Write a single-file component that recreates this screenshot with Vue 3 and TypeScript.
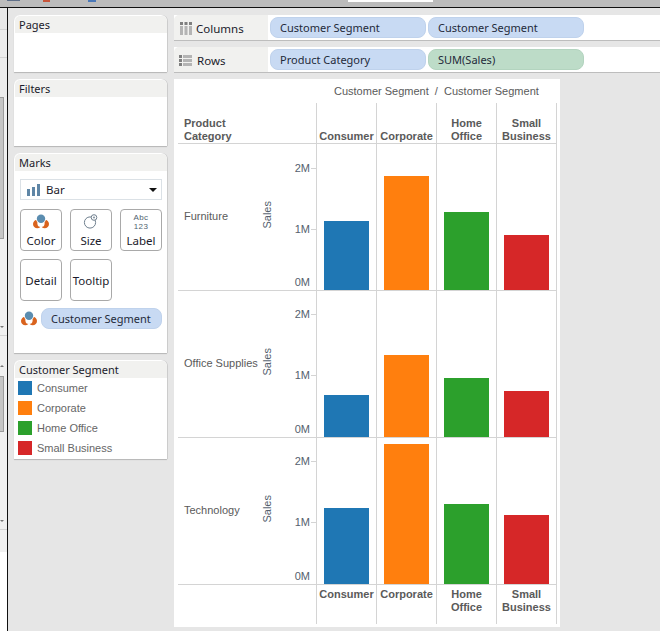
<script setup lang="ts">
interface Row { name: string; bars: number[] }
const colors: string[] = ['#1f77b4', '#ff7f0e', '#2ca02c', '#d62728']
const segments: string[] = ['Consumer', 'Corporate', 'Home Office', 'Small Business']
const rows: Row[] = [
  { name: 'Furniture', bars: [69, 114, 78, 55] },
  { name: 'Office Supplies', bars: [42, 82, 59, 46] },
  { name: 'Technology', bars: [76, 140, 80, 69] },
]
</script>

<template>
  <div class="app">
    <div class="topstrip">
      <i class="frag frag-a"></i><i class="frag frag-b"></i><i class="frag frag-c"></i>
      <i class="frag frag-w"></i>
    </div>
    <div class="body">
      <div class="sidebar">
        <div class="side-top"><div class="st1"></div><div class="st2"></div></div>
        <div class="thumb thumb-1"></div>
        <div class="side-mid">
          <i class="arr-d"></i>
          <div class="side-line"></div>
          <i class="arr-u"></i>
        </div>
        <div class="thumb thumb-2"></div>
        <div class="side-low">
          <i class="arr-d"></i>
          <div class="side-line"></div>
        </div>
        <div class="side-white"></div>
      </div>
      <div class="main">
        <div class="left">
          <section class="card pages">
            <header class="card-h">Pages</header>
          </section>
          <section class="card filters">
            <header class="card-h">Filters</header>
          </section>
          <section class="card marks">
            <header class="card-h">Marks</header>
            <div class="marks-body">
              <div class="select">
                <svg class="bar-ico" width="13" height="12" viewBox="0 0 13 12">
                  <rect x="0" y="5" width="3" height="7" fill="#5f86a6" />
                  <rect x="5" y="3" width="3" height="9" fill="#5f86a6" />
                  <rect x="10" y="0" width="3" height="12" fill="#5f86a6" />
                </svg>
                <span>Bar</span>
                <i class="caret"></i>
              </div>
              <div class="btns">
                <div class="btn">
                  <svg class="ico" width="16" height="15" viewBox="0 0 16 15">
                    <circle cx="4.3" cy="10" r="4.3" fill="#d9631e" />
                    <circle cx="11.7" cy="10" r="4.3" fill="#d9631e" />
                    <circle cx="8" cy="9.5" r="3.6" fill="#fff" />
                    <circle cx="8" cy="4.7" r="5" fill="#fff" />
                    <circle cx="8" cy="4.7" r="4.2" fill="#5b8db0" />
                  </svg>
                  <span>Color</span>
                </div>
                <div class="btn">
                  <svg class="ico" width="16" height="15" viewBox="0 0 16 15">
                    <circle cx="7" cy="8.5" r="5.6" fill="none" stroke="#6f7f8e" stroke-width="1" />
                    <circle cx="11" cy="3.5" r="2.8" fill="#fff" stroke="#6f7f8e" stroke-width="1" />
                    <circle cx="11" cy="3.5" r="1.1" fill="#8a99a6" />
                  </svg>
                  <span>Size</span>
                </div>
                <div class="btn">
                  <div class="abc">Abc<br />123</div>
                  <span>Label</span>
                </div>
                <div class="btn plain"><span>Detail</span></div>
                <div class="btn plain"><span>Tooltip</span></div>
              </div>
              <div class="enc">
                <svg width="16" height="15" viewBox="0 0 16 15">
                  <circle cx="4.3" cy="10" r="4.3" fill="#d9631e" />
                  <circle cx="11.7" cy="10" r="4.3" fill="#d9631e" />
                  <circle cx="8" cy="9.5" r="3.6" fill="#fff" />
                  <circle cx="8" cy="4.7" r="5" fill="#fff" />
                  <circle cx="8" cy="4.7" r="4.2" fill="#5b8db0" />
                </svg>
                <div class="pill enc-pill">Customer Segment</div>
              </div>
            </div>
          </section>
          <section class="card legend">
            <header class="card-h">Customer Segment</header>
            <div class="legend-body">
              <div v-for="(s, i) in segments" :key="s" class="leg-row">
                <i class="swatch" :style="{ background: colors[i] }"></i>
                <span>{{ s }}</span>
              </div>
            </div>
          </section>
        </div>
        <div class="right">
          <div class="shelf shelf-c">
            <div class="shelf-l">
              <svg class="shelf-ico" width="12" height="13" viewBox="0 0 12 13">
                <g fill="#7f7f7f"><rect x="0" y="0" width="3" height="3" /><rect x="4.5" y="0" width="3" height="3" /><rect x="9" y="0" width="3" height="3" /></g>
                <g fill="#b4b4b4"><rect x="0" y="4" width="3" height="9" /><rect x="4.5" y="4" width="3" height="9" /><rect x="9" y="4" width="3" height="9" /></g>
              </svg>
              <span>Columns</span>
            </div>
            <div class="pill blue">Customer Segment</div>
            <div class="pill blue">Customer Segment</div>
          </div>
          <div class="shelf shelf-r">
            <div class="shelf-l">
              <svg class="shelf-ico" width="13" height="11" viewBox="0 0 13 11">
                <g fill="#7f7f7f"><rect x="0" y="0" width="3" height="3" /><rect x="0" y="4" width="3" height="3" /><rect x="0" y="8" width="3" height="3" /></g>
                <g fill="#b4b4b4"><rect x="4" y="0" width="9" height="3" /><rect x="4" y="4" width="9" height="3" /><rect x="4" y="8" width="9" height="3" /></g>
              </svg>
              <span>Rows</span>
            </div>
            <div class="pill blue">Product Category</div>
            <div class="pill green">SUM(Sales)</div>
          </div>
          <div class="viz">
            <div class="title">Customer Segment &nbsp;/&nbsp; Customer Segment</div>
            <div class="grid-row head">
              <div class="lab-cell head-lab">Product<br />Category</div>
              <div v-for="s in segments" :key="s" class="col-h">
                <span v-if="s.includes(' ')">{{ s.split(' ')[0] }}<br />{{ s.split(' ')[1] }}</span>
                <span v-else>{{ s }}</span>
              </div>
            </div>
            <div v-for="r in rows" :key="r.name" class="grid-row pane">
              <div class="lab-cell pane-lab">
                <span class="cat">{{ r.name }}</span>
                <span class="sales">Sales</span>
                <div class="axis">
                  <div class="tick t2"><span>2M</span><i></i></div>
                  <div class="tick t1"><span>1M</span><i></i></div>
                  <div class="tick t0"><span>0M</span><i class="none"></i></div>
                </div>
              </div>
              <div v-for="(b, i) in r.bars" :key="i" class="bar-cell">
                <div class="bar" :style="{ height: b + 'px', background: colors[i] }"></div>
              </div>
            </div>
            <div class="grid-row foot">
              <div class="lab-cell"></div>
              <div v-for="s in segments" :key="s" class="col-h">
                <span v-if="s.includes(' ')">{{ s.split(' ')[0] }}<br />{{ s.split(' ')[1] }}</span>
                <span v-else>{{ s }}</span>
              </div>
            </div>
          </div>
        </div>
      </div>
    </div>
  </div>
</template>

<style>
html, body { margin: 0; padding: 0; }
</style>

<style scoped>
.app {
  width: 660px;
  height: 631px;
  overflow: hidden;
  background: #e6e6e6;
  font-family: "Noto Sans", sans-serif;
  display: flex;
  flex-direction: column;
}
.topstrip {
  height: 7px;
  flex: none;
  background: #bcbcbc;
  border-bottom: 1px solid #111;
  display: flex;
  align-items: flex-start;
}
.frag { display: block; height: 2px; }
.frag-a { width: 13px; height: 1px; margin-left: 7px; background: #5f6f88; }
.frag-b { width: 7px; margin-left: 23px; background: #c8553a; }
.frag-c { width: 8px; margin-left: 38px; background: #4a78b8; }
.frag-w { width: 85px; margin-left: 252px; background: #fff; }
.body { flex: 1; display: flex; min-height: 0; }
.sidebar {
  width: 8px;
  box-sizing: border-box;
  flex: none;
  background: #f0f0f0;
  border-right: 1px solid #111;
  display: flex;
  flex-direction: column;
}
.side-top { height: 89px; flex: none; box-sizing: border-box; background: #ececec; }
.st1 { height: 21px; border-bottom: 1px solid #d4d4d4; background: #e8e8e8; }
.st2 { height: 27px; border-bottom: 1px solid #d4d4d4; }
.thumb { width: 4px; background: #c6c6c6; border: 1px solid #9c9c9c; border-left: 0; box-sizing: border-box; flex: none; }
.thumb-1 { height: 142px; }
.side-mid { height: 137px; flex: none; display: flex; flex-direction: column; }
.thumb-2 { height: 56px; }
.side-low { height: 120px; flex: none; display: flex; flex-direction: column; }
.side-white { flex: 1; background: #fff; }
.side-line { height: 1px; background: #d4d4d4; margin-top: 7px; flex: none; }
.arr-d, .arr-u {
  display: block;
  width: 0;
  height: 0;
  border-left: 2px solid transparent;
  border-right: 2px solid transparent;
  flex: none;
}
.arr-d { border-top: 2px solid #777; }
.arr-u { border-bottom: 2px solid #777; margin-top: 29px; }
.side-mid .arr-d { margin-top: 87px; }
.side-low .arr-d { margin-top: 88px; }

.main { flex: 1; display: flex; padding: 7px 0 0 6px; gap: 7px; min-width: 0; }
.left { width: 153px; flex: none; display: flex; flex-direction: column; gap: 7px; }
.card {
  background: #fff;
  border-radius: 6px 6px 0 0;
  box-shadow: 0 1px 1px #b5b5b5, 1px 0 0 #cfcfcf;
  box-sizing: border-box;
  padding: 1px 0 0 1px;
}
.card-h {
  height: 17px;
  line-height: 18px;
  background: #f1f1ef;
  border-radius: 5px 5px 0 0;
  padding-left: 4px;
  font-size: 11px;
  color: #1b1b2b;
}
.pages { height: 57px; }
.filters { height: 67px; }
.marks { height: 200px; }
.legend { height: 99px; }
.marks-body { padding: 8px 5px 0 5px; }
.select {
  width: 142px;
  height: 21px;
  box-sizing: border-box;
  border: 1px solid #dbe1e6;
  display: flex;
  align-items: center;
  font-size: 11.5px;
  color: #1b1b2b;
  padding-left: 6px;
}
.bar-ico { margin-right: 6px; }
.caret {
  margin-left: auto;
  margin-right: 4px;
  width: 0;
  height: 0;
  border-left: 4px solid transparent;
  border-right: 4px solid transparent;
  border-top: 4px solid #111;
}
.btns {
  display: grid;
  grid-template-columns: repeat(3, 42px);
  grid-auto-rows: 42px;
  gap: 8px;
  margin-top: 9px;
}
.btn {
  box-sizing: border-box;
  border: 1px solid #a9a9a9;
  border-radius: 4px;
  display: flex;
  flex-direction: column;
  align-items: center;
  justify-content: flex-end;
  padding-bottom: 1px;
  font-size: 11.5px;
  color: #1b1b2b;
  line-height: 17px;
}
.btn.plain { justify-content: center; padding-bottom: 0; padding-top: 1px; }
.ico { margin-bottom: 3px; }
.abc {
  font-family: "Liberation Sans", sans-serif;
  font-size: 8px;
  letter-spacing: 0.4px;
  line-height: 9.2px;
  color: #4f5f6f;
  text-align: center;
  margin-bottom: 1px;
}
.enc { display: flex; align-items: center; gap: 4px; margin-top: 7px; padding-left: 1px; }
.pill {
  box-sizing: border-box;
  height: 21px;
  line-height: 19px;
  border-radius: 8px;
  padding-left: 9px;
  font-size: 11px;
  white-space: nowrap;
  color: #1f2a3a;
  border: 1px solid transparent;
}
.blue { width: 156px; background: #c8daf3; border-color: #bfd2ec; }
.green { width: 156px; background: #bddcc8; border-color: #b3d4bf; }
.enc-pill { width: 121px; background: #c8daf3; border-color: #bfd2ec; }
.legend-body { padding: 0 0 0 3px; }
.leg-row {
  height: 20px;
  display: flex;
  align-items: center;
  gap: 5px;
  font-family: "Liberation Sans", sans-serif;
  font-size: 11px;
  color: #666;
}
.swatch { width: 14px; height: 14px; display: block; flex: none; }

.right { flex: 1; display: flex; flex-direction: column; min-width: 0; }
.shelf {
  display: flex;
  gap: 2px;
  background: #fff;
  box-shadow: 0 1px 0 #bdbdbd;
  box-sizing: border-box;
  align-items: center;
}
.shelf-c { height: 25px; margin-bottom: 7px; }
.shelf-r { height: 25px; margin-bottom: 7px; }
.shelf-l {
  width: 94px;
  height: 100%;
  flex: none;
  background: #f1f1ef;
  border-radius: 5px 0 0 0;
  display: flex;
  align-items: center;
  padding-left: 5px;
  box-sizing: border-box;
  font-size: 11.5px;
  color: #1b1b2b;
  padding-top: 2px;
}
.shelf-ico { margin-right: 5px; flex: none; }
.shelf-c .shelf-ico { margin-left: 1px; margin-right: 4px; }
.viz {
  width: 386px;
  height: 548px;
  background: #fff;
  box-sizing: border-box;
  padding-left: 4px;
  font-family: "Liberation Sans", sans-serif;
  font-size: 11px;
  color: #5a5a5a;
}
.title { height: 24px; line-height: 24px; padding-left: 156px; white-space: nowrap; color: #5a5a5a; }
.grid-row {
  display: grid;
  grid-template-columns: 139px repeat(4, 60px);
  width: 379px;
}
.lab-cell { border-right: 1px solid #d4d4d4; box-sizing: border-box; }
.head, .pane { border-bottom: 1px solid #d4d4d4; }
.head { height: 41px; box-sizing: border-box; }
.head-lab {
  font-weight: 700;
  line-height: 13px;
  padding: 14px 0 0 6px;
  height: 40px;
}
.col-h {
  border-right: 1px solid #d4d4d4;
  box-sizing: border-box;
  font-weight: 700;
  text-align: center;
  line-height: 13px;
  display: flex;
  justify-content: center;
  white-space: nowrap;
}
.head .col-h { align-items: flex-end; padding-bottom: 0; }
.foot { height: 40px; }
.foot .col-h { align-items: flex-start; padding-top: 3px; height: 39px; }
.foot .lab-cell { height: 39px; }
.pane { height: 147px; box-sizing: border-box; grid-template-rows: 146px; }
.pane-lab { display: flex; align-items: center; padding: 0 0 0 6px; }
.cat { width: 77px; flex: none; white-space: nowrap; margin-bottom: 2px; }
.sales {
  writing-mode: vertical-rl;
  transform: rotate(180deg);
  width: 12px;
  flex: none;
  text-align: center;
  color: #555f6e;
  line-height: 12px;
  margin-bottom: 4px;
}
.axis {
  margin-left: auto;
  align-self: stretch;
  padding-top: 17px;
  display: flex;
  flex-direction: column;
  align-items: flex-end;
  box-sizing: border-box;
  color: #555f6e;
}
.tick { display: flex; align-items: center; height: 14px; gap: 1px; }
.tick i { display: block; width: 5px; height: 1px; background: #d4d4d4; }
.tick i.none { background: transparent; }
.t1 { margin-top: 47px; }
.t0 { margin-top: 39px; }
.pane:nth-child(n+4) .axis { padding-top: 16px; }
.pane:nth-child(n+4) .t0 { margin-top: 40px; }
.bar-cell {
  border-right: 1px solid #d4d4d4;
  box-sizing: border-box;
  display: flex;
  justify-content: center;
  align-items: flex-end;
}
.bar { width: 45px; }
</style>
